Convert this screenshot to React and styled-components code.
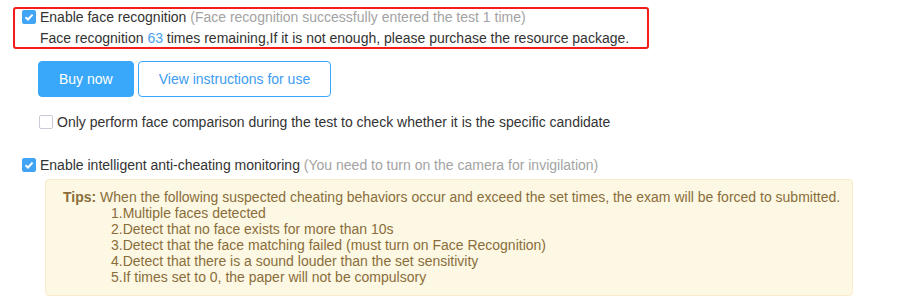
import React from "react";
import styled, { createGlobalStyle } from "styled-components";

const GlobalStyle = createGlobalStyle`
  body {
    margin: 0;
    background: #fff;
    font-family: "Liberation Sans", Arial, sans-serif;
    font-size: 14px;
    color: #333;
  }
`;

const Page = styled.div`
  padding: 7px 0 0 13px;
  width: 911px;
`;

const Highlight = styled.div`
  width: 625px;
  border: 2px solid #f51c1c;
  border-radius: 3px;
  padding: 0 0 1px 7px;
`;

const Row = styled.div`
  display: flex;
  align-items: center;
  gap: 4px;
  white-space: nowrap;
  line-height: ${({ $lh }) => $lh || 20}px;
  margin-top: ${({ $mt }) => $mt || 0}px;
  margin-left: ${({ $ml }) => $ml || 0}px;
`;

const Box = styled.span`
  width: 14px;
  height: 14px;
  box-sizing: border-box;
  border-radius: 2px;
  flex-shrink: 0;
  display: flex;
  align-items: center;
  justify-content: center;
  background: ${({ $on }) => ($on ? "#42a4f4" : "#fff")};
  border: 1px solid ${({ $on }) => ($on ? "#42a4f4" : "#c8ccd4")};
`;

const Hint = styled.span`
  color: #a3a3a3;
`;

const Line = styled.div`
  line-height: 16px;
  white-space: nowrap;
  margin: 5px 0 0 18px;
`;

const Num = styled.span`
  color: #4a9ff0;
`;

const Buttons = styled.div`
  display: flex;
  gap: 4px;
  margin: 12px 0 0 25px;
`;

const Button = styled.button`
  height: 36px;
  padding: 0 20px;
  font-family: inherit;
  font-size: 14px;
  border-radius: 4px;
  border: 1px solid #3aa8fa;
  background: ${({ $primary }) => ($primary ? "#3aa8fa" : "#fff")};
  color: ${({ $primary }) => ($primary ? "#fff" : "#3d9cf2")};
  cursor: pointer;
`;

const Tips = styled.div`
  margin: 4px 0 0 32px;
  width: 772px;
  padding: 9px 17px 10px;
  background: #fcf8e3;
  border: 1px solid #faebcc;
  border-radius: 4px;
  color: #8a6d3b;
  line-height: 16px;
  white-space: nowrap;
`;

const Item = styled.div`
  padding-left: 48px;
`;

const Check = ({ on }) => (
  <Box $on={on}>
    {on && (
      <svg width="10" height="10" viewBox="0 0 10 10">
        <path d="M1.5 5.2 L4 7.5 L8.6 2.6" fill="none" stroke="#fff" strokeWidth="2" />
      </svg>
    )}
  </Box>
);

const items = [
  "1.Multiple faces detected",
  "2.Detect that no face exists for more than 10s",
  "3.Detect that the face matching failed (must turn on Face Recognition)",
  "4.Detect that there is a sound louder than the set sensitivity",
  "5.If times set to 0, the paper will not be compulsory",
];

export default function App() {
  return (
    <Page>
      <GlobalStyle />
      <Highlight>
        <Row $lh={16}>
          <Check on />
          <span>
            Enable face recognition <Hint>(Face recognition successfully entered the test 1 time)</Hint>
          </span>
        </Row>
        <Line>
          Face recognition <Num>63</Num> times remaining,If it is not enough, please purchase the resource package.
        </Line>
      </Highlight>
      <Buttons>
        <Button $primary>Buy now</Button>
        <Button>View instructions for use</Button>
      </Buttons>
      <Row $mt={15} $ml={26}>
        <Check />
        <span>Only perform face comparison during the test to check whether it is the specific candidate</span>
      </Row>
      <Row $mt={23} $ml={9}>
        <Check on />
        <span>
          Enable intelligent anti-cheating monitoring <Hint>(You need to turn on the camera for invigilation)</Hint>
        </span>
      </Row>
      <Tips>
        <div>
          <b>Tips:</b> When the following suspected cheating behaviors occur and exceed the set times, the exam will be forced to submitted.
        </div>
        {items.map((t) => (
          <Item key={t}>{t}</Item>
        ))}
      </Tips>
    </Page>
  );
}
